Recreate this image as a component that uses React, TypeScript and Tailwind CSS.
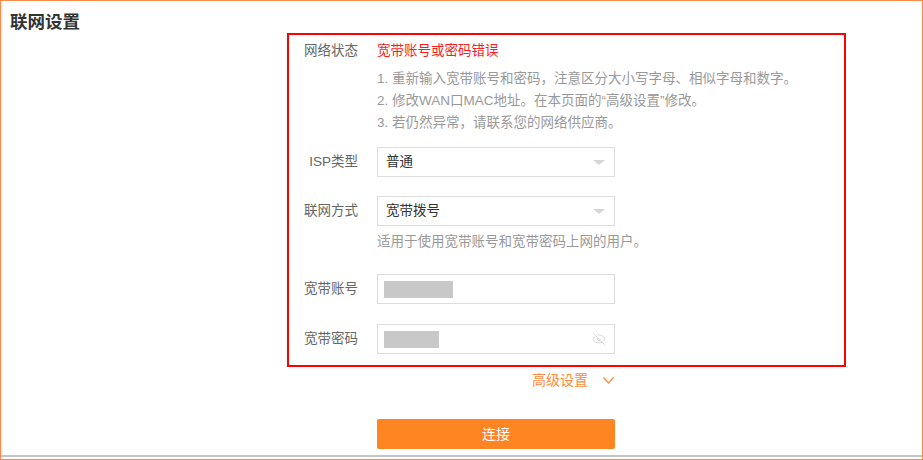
import { EyeOff } from "lucide-react";

const font = { fontFamily: '"Liberation Sans", "Noto Sans CJK SC", sans-serif' };

function Label({ text }: { text: string }) {
  return <div className="w-[69px] shrink-0 text-right text-[13.5px] leading-[22px] text-[#666]">{text}</div>;
}

function Select({ value }: { value: string }) {
  return (
    <div className="ml-[19px] flex h-[30px] w-[238px] items-center justify-between border border-[#ddd] bg-white pl-[8px] pr-[9px]">
      <span className="text-[13.5px] text-[#333]">{value}</span>
      <span className="h-0 w-0 border-l-[6px] border-r-[6px] border-t-[5px] border-l-transparent border-r-transparent border-t-[#d6d6d6]" />
    </div>
  );
}

function MaskedInput({ mask, eye }: { mask: string; eye?: boolean }) {
  return (
    <div className="ml-[19px] flex h-[30px] w-[238px] items-center justify-between border border-[#ddd] bg-white pl-[6px] pr-[8px]">
      <span className={`h-[17px] bg-[#c8c8c8] ${mask}`} />
      {eye && <EyeOff size={14} strokeWidth={1.6} className="text-[#d8d8d8]" />}
    </div>
  );
}

export default function App() {
  return (
    <div style={font} className="box-border h-[460px] w-[923px] border border-[#f98a4a] bg-white">
      <div className="flex h-[456px] border-b-2 border-[#c4c4c4] shadow-[inset_3px_0_3px_-2px_rgba(0,0,0,0.08)]">
        <div className="w-[286px] shrink-0 pl-[9px] pt-[9px]">
          <h1 className="text-[17.5px] font-bold leading-[24px] text-[#333]">联网设置</h1>
        </div>

        <div className="flex flex-col">
          <div className="mt-[32px] w-[559px] border-2 border-[#ff0000] pb-[11px] pt-[5px]">
            <div className="flex">
              <Label text="网络状态" />
              <div className="ml-[19px] flex flex-col">
                <span className="text-[13.5px] leading-[22px] text-[#ff1a1a]">宽带账号或密码错误</span>
                <ul className="mt-[6px] text-[13.5px] leading-[22px] text-[#999]">
                  <li>1. 重新输入宽带账号和密码，注意区分大小写字母、相似字母和数字。</li>
                  <li>2. 修改WAN口MAC地址。在本页面的“高级设置”修改。</li>
                  <li>3. 若仍然异常，请联系您的网络供应商。</li>
                </ul>
              </div>
            </div>

            <div className="mt-[13px] flex items-center">
              <Label text="ISP类型" />
              <Select value="普通" />
            </div>

            <div className="mt-[19px] flex items-center">
              <Label text="联网方式" />
              <Select value="宽带拨号" />
            </div>
            <p className="ml-[88px] mt-[5px] text-[13.5px] leading-[22px] text-[#999]">适用于使用宽带账号和宽带密码上网的用户。</p>

            <div className="mt-[21px] flex items-center">
              <Label text="宽带账号" />
              <MaskedInput mask="w-[69px]" />
            </div>

            <div className="mt-[20px] flex items-center">
              <Label text="宽带密码" />
              <MaskedInput mask="w-[55px]" eye />
            </div>
          </div>

          <div className="ml-[245px] mt-[3px] flex items-center gap-[15px] text-[14px] leading-[20px] text-[#ff8a3d]">
            <span>高级设置</span>
            <svg width="11" height="7" viewBox="0 0 11 7" fill="none" stroke="#ff8a3d" strokeWidth="1.2">
              <polyline points="0.5,0.5 5.5,6 10.5,0.5" />
            </svg>
          </div>

          <button className="ml-[90px] mt-[29px] h-[30px] w-[238px] rounded-[2px] bg-[#ff8422] text-[14px] text-white">连接</button>
        </div>
      </div>
    </div>
  );
}
